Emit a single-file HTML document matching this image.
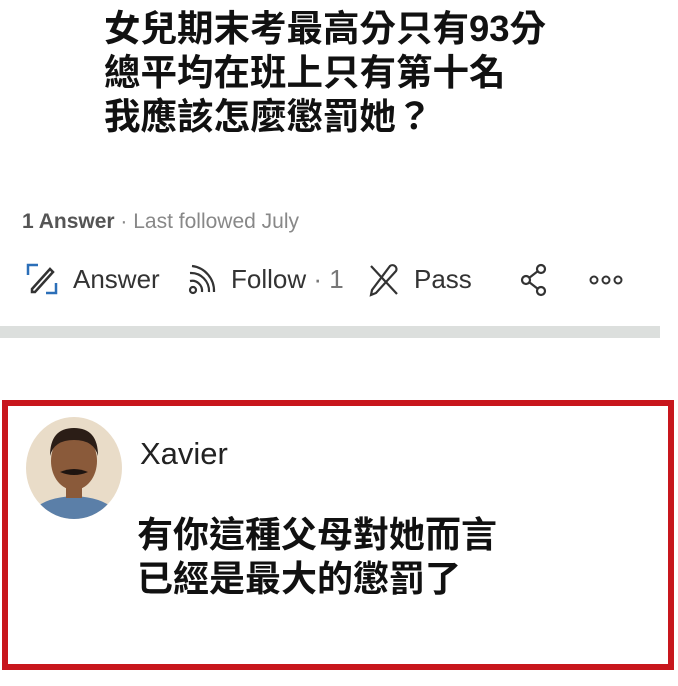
<!DOCTYPE html>
<html><head><meta charset="utf-8"><style>
html,body{margin:0;padding:0;background:#fff;width:678px;height:686px;overflow:hidden;position:relative;font-family:"Liberation Sans","Noto Sans CJK TC",sans-serif}
.t{position:absolute;left:104px;font-size:36.5px;font-weight:bold;color:#111;line-height:44px;white-space:nowrap}
.meta{position:absolute;left:22px;top:210px;font-size:21px;color:#888}
.meta b{color:#555;font-weight:bold}
.act{position:absolute;top:264px;font-size:26px;color:#333}
svg{position:absolute}
</style></head><body>
<div class="t" style="top:7px">女兒期末考最高分只有93分<br>總平均在班上只有第十名<br>我應該怎麼懲罰她？</div>
<div class="meta"><b>1 Answer</b> · Last followed July</div>
<svg style="left:26px;top:263px" width="32" height="32" viewBox="0 0 32 32" fill="none" stroke="#2b6fb8" stroke-width="2.5"><path d="M2 12V2h10M30 20v10H20"/><path d="M6 26L24 6l3 3L9 29H6z" stroke="#333"/></svg>
<div class="act" style="left:73px">Answer</div>
<svg style="left:186px;top:264px" width="30" height="32" viewBox="0 0 30 32" fill="none" stroke="#333" stroke-width="2.2"><circle cx="7" cy="26" r="3"/><path d="M4 17a10 10 0 0 1 12 11M4 9a18 18 0 0 1 19 19M6 2a25 25 0 0 1 22 26"/></svg>
<div class="act" style="left:231px">Follow <span style="color:#777">· 1</span></div>
<svg style="left:368px;top:263px" width="32" height="34" viewBox="0 0 32 34" fill="none" stroke="#333" stroke-width="2.2"><path d="M3 3l26 28M22 3a4 4 0 0 1 6 5L8 30l-5 2 1-5z"/></svg>
<div class="act" style="left:414px">Pass</div>
<svg style="left:518px;top:263px" width="32" height="34" viewBox="0 0 32 34" fill="none" stroke="#333" stroke-width="2.2"><circle cx="8" cy="17" r="4"/><circle cx="23" cy="6" r="4"/><circle cx="23" cy="28" r="4"/><path d="M11 15l9-7M11 19l9 7"/></svg>
<svg style="left:588px;top:274px" width="40" height="12" viewBox="0 0 40 12" fill="none" stroke="#333" stroke-width="2"><circle cx="6" cy="6" r="3.5"/><circle cx="18" cy="6" r="3.5"/><circle cx="30" cy="6" r="3.5"/></svg>
<div style="position:absolute;left:0;top:326px;width:660px;height:12px;background:#dcdfdd"></div>
<div style="position:absolute;left:2px;top:400px;width:660px;height:258px;border:6px solid #c8161d"></div>
<svg style="left:24px;top:416px" width="100" height="104" viewBox="0 0 100 104"><defs><clipPath id="c"><ellipse cx="50" cy="52" rx="48" ry="51"/></clipPath></defs><g clip-path="url(#c)"><rect width="100" height="104" fill="#e9dcc8"/><path d="M5 104q5-22 45-24q40 2 45 24z" fill="#5b7fa8"/><ellipse cx="50" cy="45" rx="23" ry="29" fill="#8a5a3a"/><path d="M26 40q0-28 24-28q24 0 24 28q-4-16-24-16q-20 0-24 16z" fill="#2b1d16"/><path d="M36 56q14-6 28 0q-14 6-28 0z" fill="#1e1410"/><rect x="42" y="70" width="16" height="12" fill="#8a5a3a"/></g></svg>
<div style="position:absolute;left:140px;top:436px;font-size:31px;color:#222">Xavier</div>
<div style="position:absolute;left:137px;top:513px;font-size:36px;font-weight:bold;color:#111;line-height:44px;white-space:nowrap">有你這種父母對她而言<br>已經是最大的懲罰了</div>
</body></html>
